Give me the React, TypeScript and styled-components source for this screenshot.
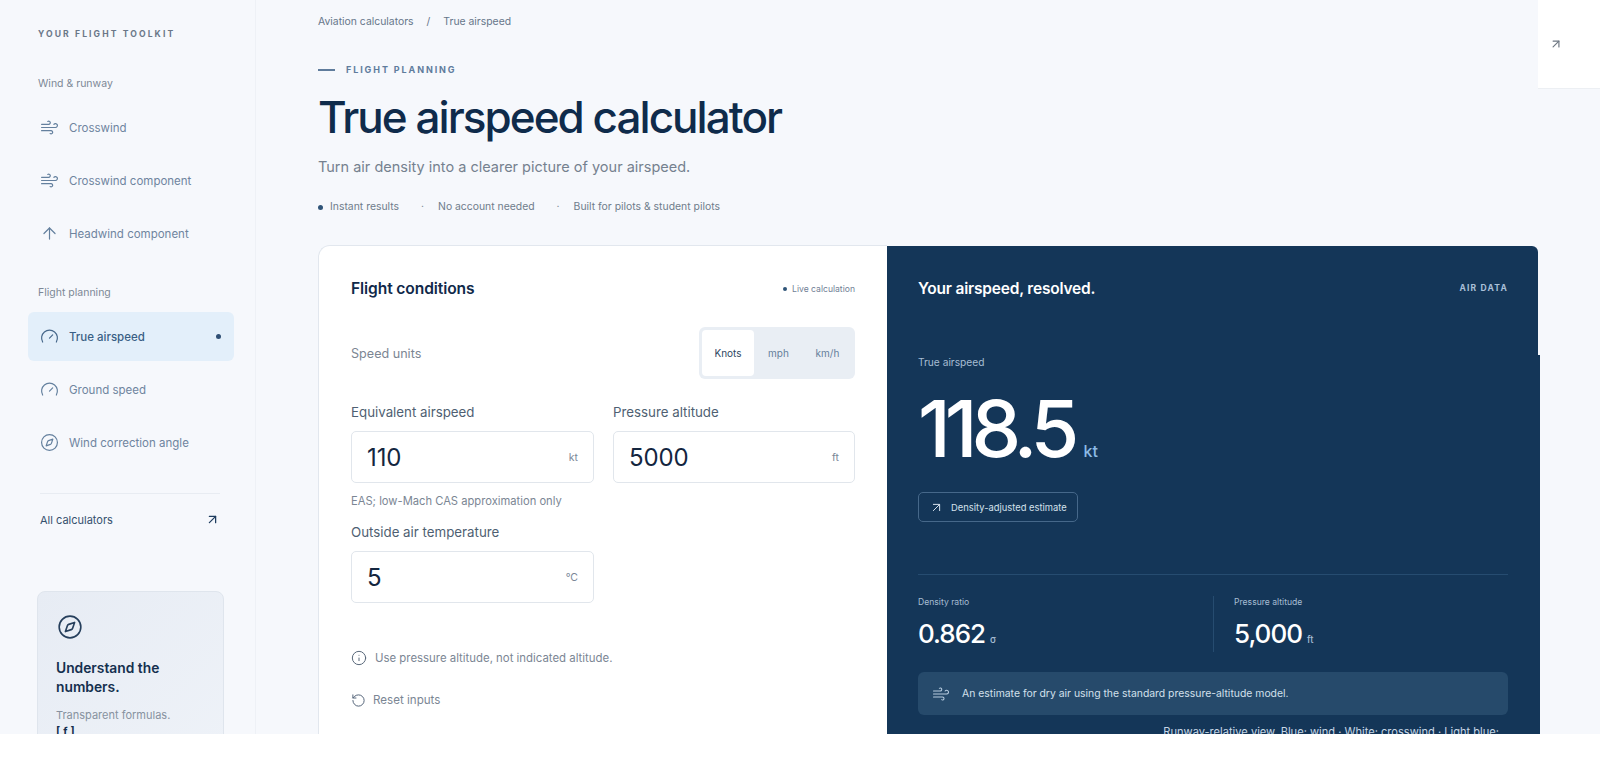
import React from 'react';
import styled, { createGlobalStyle } from 'styled-components';
import { Wind, ArrowUp, Gauge, Compass, ArrowUpRight, Info, RotateCcw } from 'lucide-react';

const Global = createGlobalStyle`
  html, body { margin: 0; padding: 0; background: #ffffff; }
  * { box-sizing: border-box; }
  body { font-family: Inter, "Noto Sans", sans-serif; }
`;

const Page = styled.div`
  display: flex;
  width: 1600px;
  height: 734px;
  overflow: hidden;
  background: #f6f8fc;
`;

const Sidebar = styled.aside`
  flex: 0 0 256px;
  padding: 28px 21px 0 28px;
  border-right: 1px solid #eef1f6;
`;

const Brand = styled.div`
  font-size: 8.6px;
  line-height: 12px;
  font-weight: 700;
  letter-spacing: 2.1px;
  color: #6a7788;
  padding-left: 10px;
  margin-bottom: 37px;
`;

const GroupLabel = styled.div`
  font-size: 10.5px;
  line-height: 14px;
  color: #7d8896;
  padding-left: 10px;
  margin-bottom: 12px;
`;

const NavList = styled.nav`
  display: flex;
  flex-direction: column;
  gap: 4px;
  margin-bottom: 28px;
`;

const NavRow = styled.a<{ $active?: boolean }>`
  display: flex;
  align-items: center;
  gap: 10px;
  height: 49px;
  padding: 0 13px 0 12px;
  border-radius: 6px;
  font-size: 11.5px;
  font-weight: ${p => (p.$active ? 500 : 400)};
  color: ${p => (p.$active ? '#3a5f85' : '#6f859f')};
  background: ${p => (p.$active ? '#e3effa' : 'transparent')};
  svg { flex: none; color: ${p => (p.$active ? '#46678a' : '#64809e')}; }
`;

const ActiveDot = styled.span`
  margin-left: auto;
  width: 5px;
  height: 5px;
  border-radius: 50%;
  background: #2f4f74;
`;

const AllLink = styled.a`
  display: flex;
  align-items: center;
  justify-content: space-between;
  margin: -2px 14px 0 12px;
  height: 52px;
  border-top: 1px solid #e8ecf2;
  font-size: 11px;
  color: #35506e;
  svg { color: #1f3d5f; }
`;

const HelpCard = styled.div`
  width: 187px;
  height: 170px;
  margin: 46px 0 0 9px;
  padding: 22px 18px;
  border: 1px solid #dfe5ed;
  border-radius: 8px;
  background: linear-gradient(135deg, #e7ecf4, #eef2f8);
  svg { display: block; margin-left: 1px; color: #263f5c; }
`;

const HelpTitle = styled.div`
  margin-top: 19px;
  font-size: 13.8px;
  line-height: 19px;
  font-weight: 600;
  color: #15304f;
`;

const HelpText = styled.div`
  margin-top: 10px;
  font-size: 11px;
  line-height: 16px;
  color: #87929f;
`;

const HelpFormula = styled.div`
  font-size: 11px;
  line-height: 16px;
  font-weight: 700;
  color: #15304f;
`;

const Main = styled.main`
  flex: 1;
  min-width: 0;
  padding: 15px 0 0 62px;
`;

const Crumbs = styled.div`
  display: flex;
  gap: 13px;
  font-size: 10.4px;
  line-height: 14px;
  color: #66768a;
`;

const Eyebrow = styled.div`
  display: flex;
  align-items: center;
  gap: 11px;
  margin-top: 34px;
  font-size: 9px;
  line-height: 14px;
  font-weight: 700;
  letter-spacing: 1.9px;
  color: #5f7c9c;
  &::before { content: ''; width: 17px; height: 2px; background: #5f7c9c; }
`;

const Title = styled.h1`
  margin: 12px 0 0;
  font-size: 44px;
  line-height: 56px;
  font-weight: 500;
  letter-spacing: -1.95px;
  color: #0f2b4b;
`;

const Subtitle = styled.p`
  margin: 11px 0 0;
  font-size: 14.5px;
  line-height: 22px;
  color: #75818f;
`;

const Meta = styled.div`
  display: flex;
  align-items: center;
  margin-top: 22px;
  font-size: 10.4px;
  line-height: 14px;
  color: #6f7c8b;
`;

const MetaDot = styled.span`
  width: 5px;
  height: 5px;
  margin-right: 7px;
  border-radius: 50%;
  background: #2f5478;
`;

const MetaSep = styled.span`
  margin: 0 14px 0 22px;
`;

const Shell = styled.section`
  display: flex;
  align-items: flex-start;
  margin: 31px -2px 0 0;
`;

const InputPanel = styled.div`
  flex: 0 0 567px;
  height: 520px;
  padding: 32px 32px 0;
  background: #ffffff;
  border: 1px solid #e2e7ee;
  border-right: 0;
  border-radius: 12px 0 0 12px;
`;

const PanelHead = styled.div`
  display: flex;
  align-items: center;
  justify-content: space-between;
`;

const PanelTitle = styled.h2`
  margin: 0;
  font-size: 15.6px;
  line-height: 22px;
  font-weight: 600;
  letter-spacing: -0.1px;
  color: #10294a;
`;

const LiveBadge = styled.span`
  display: flex;
  align-items: center;
  gap: 5px;
  font-size: 8.6px;
  color: #708095;
  &::before { content: ''; width: 4px; height: 4px; border-radius: 50%; background: #2f5478; }
`;

const UnitsRow = styled.div`
  display: flex;
  align-items: center;
  justify-content: space-between;
  margin-top: 27px;
  font-size: 12.6px;
  color: #7c8693;
`;

const Segments = styled.div`
  display: flex;
  width: 156px;
  height: 52px;
  padding: 3px;
  border-radius: 6px;
  background: #e9eef4;
`;

const Segment = styled.button<{ $on?: boolean }>`
  flex: ${p => (p.$on ? '0 0 52px' : '1')};
  padding: 0;
  border: 0;
  border-radius: 4px;
  font: inherit;
  font-size: 10px;
  color: ${p => (p.$on ? '#2f4762' : '#667f9a')};
  background: ${p => (p.$on ? '#ffffff' : 'transparent')};
`;

const Fields = styled.div`
  display: grid;
  grid-template-columns: 243px 242px;
  column-gap: 19px;
  row-gap: 15px;
  margin-top: 24px;
`;

const Label = styled.label`
  display: block;
  font-size: 13.3px;
  line-height: 18px;
  color: #4f5f72;
`;

const InputBox = styled.div`
  display: flex;
  align-items: center;
  height: 52px;
  margin-top: 10px;
  padding: 0 15px;
  background: #fff;
  border: 1px solid #e1e6ec;
  border-radius: 5px;
`;

const NumberInput = styled.input`
  flex: 1;
  min-width: 0;
  padding: 0;
  border: 0;
  outline: 0;
  background: transparent;
  font: inherit;
  font-size: 24px;
  letter-spacing: -0.1px;
  color: #14263f;
`;

const Unit = styled.span`
  font-size: 10.5px;
  color: #7a8797;
`;

const Hint = styled.div`
  margin-top: 11px;
  font-size: 11.2px;
  line-height: 14px;
  color: #7b8694;
`;

const InfoLine = styled.div`
  display: flex;
  align-items: center;
  gap: 8px;
  margin-top: 47px;
  font-size: 11.4px;
  line-height: 16px;
  color: #7b8694;
  svg { color: #59687a; }
`;

const ResetLine = styled.div`
  display: flex;
  align-items: center;
  gap: 7px;
  margin-top: 26px;
  font-size: 11.6px;
  line-height: 16px;
  color: #7b8694;
  svg { color: #55657a; }
`;

const ResultPanel = styled.div`
  flex: 1;
  margin-top: 1px;
  color: #ffffff;
`;

const ResultTop = styled.div`
  display: flex;
  align-items: flex-start;
  justify-content: space-between;
  height: 109px;
  margin-right: 2px;
  padding: 32px 30px 0 31px;
  background: #143658;
  border-radius: 0 6px 0 0;
`;

const ResultTitle = styled.h2`
  margin: 0;
  font-size: 15.5px;
  line-height: 22px;
  font-weight: 600;
  letter-spacing: -0.2px;
`;

const Tag = styled.span`
  font-size: 8.5px;
  line-height: 20px;
  font-weight: 700;
  letter-spacing: 1.2px;
  color: #a9c0d8;
`;

const ResultBody = styled.div`
  height: 380px;
  padding: 0 32px 0 31px;
  background: #143658;
`;

const BigLabel = styled.div`
  font-size: 10.2px;
  line-height: 14px;
  color: #a7bdd3;
`;

const BigValue = styled.div`
  display: flex;
  align-items: baseline;
  gap: 10px;
  height: 80px;
  margin-top: 19px;
  font-size: 79px;
  line-height: 80px;
  font-weight: 500;
  letter-spacing: -6px;
`;

const BigUnit = styled.span`
  font-size: 16px;
  line-height: 1;
  letter-spacing: 0;
  color: #8dbbe6;
`;

const Pill = styled.div`
  display: flex;
  align-items: center;
  gap: 7px;
  width: 160px;
  height: 30px;
  margin-top: 24px;
  padding: 0 10px;
  border: 1px solid #46688a;
  border-radius: 5px;
  font-size: 9.4px;
  color: #d5e1ec;
  svg { flex: none; }
`;

const Stats = styled.div`
  display: grid;
  grid-template-columns: 1fr 1fr;
  margin-top: 52px;
  padding-top: 21px;
  border-top: 1px solid #264c70;
`;

const Stat = styled.div<{ $second?: boolean }>`
  height: 56px;
  padding-left: ${p => (p.$second ? '20px' : '0')};
  border-left: ${p => (p.$second ? '1px solid #264c70' : '0')};
`;

const StatLabel = styled.div`
  font-size: 8.6px;
  line-height: 12px;
  color: #a7bdd3;
`;

const StatValue = styled.div`
  display: flex;
  align-items: baseline;
  gap: 5px;
  height: 32px;
  margin-top: 10px;
  font-size: 26px;
  line-height: 32px;
  font-weight: 500;
  letter-spacing: -1px;
`;

const StatUnit = styled.span`
  font-size: 9.5px;
  line-height: 1;
  letter-spacing: 0;
  color: #a7bdd3;
`;

const Note = styled.div`
  display: flex;
  align-items: center;
  gap: 12px;
  height: 43px;
  margin-top: 20px;
  padding: 0 14px;
  border-radius: 6px;
  background: #264a6b;
  font-size: 10.4px;
  color: #d3e0ec;
  svg { flex: none; color: #b7cce0; }
`;

const Footnote = styled.div`
  margin-top: 9px;
  padding-right: 9px;
  text-align: right;
  font-size: 11.1px;
  line-height: 16px;
  color: #c6d6e6;
`;

const Corner = styled.div`
  flex: 0 0 62px;
  height: 89px;
  display: flex;
  align-items: center;
  padding-left: 11px;
  background: #ffffff;
  border-bottom: 1px solid #eceff3;
  svg { color: #6e7782; }
`;

const navOne = [
  { icon: Wind, text: 'Crosswind' },
  { icon: Wind, text: 'Crosswind component' },
  { icon: ArrowUp, text: 'Headwind component' },
];
const navTwo = [
  { icon: Gauge, text: 'True airspeed', active: true },
  { icon: Gauge, text: 'Ground speed' },
  { icon: Compass, text: 'Wind correction angle' },
];

export default function App() {
  return (
    <>
      <Global />
      <Page>
        <Sidebar>
          <Brand>YOUR FLIGHT TOOLKIT</Brand>
          <GroupLabel>Wind &amp; runway</GroupLabel>
          <NavList>
            {navOne.map(n => (
              <NavRow key={n.text}>
                <n.icon size={19} strokeWidth={1.5} />
                {n.text}
              </NavRow>
            ))}
          </NavList>
          <GroupLabel>Flight planning</GroupLabel>
          <NavList>
            {navTwo.map(n => (
              <NavRow key={n.text} $active={n.active}>
                <n.icon size={19} strokeWidth={1.5} />
                {n.text}
                {n.active && <ActiveDot />}
              </NavRow>
            ))}
          </NavList>
          <AllLink>
            All calculators
            <ArrowUpRight size={15} strokeWidth={2} />
          </AllLink>
          <HelpCard>
            <Compass size={26} strokeWidth={1.5} />
            <HelpTitle>Understand the numbers.</HelpTitle>
            <HelpText>Transparent formulas.</HelpText>
            <HelpFormula>[ ƒ ]</HelpFormula>
          </HelpCard>
        </Sidebar>
        <Main>
          <Crumbs>
            <span>Aviation calculators</span>
            <span>/</span>
            <span>True airspeed</span>
          </Crumbs>
          <Eyebrow>FLIGHT PLANNING</Eyebrow>
          <Title>True airspeed calculator</Title>
          <Subtitle>Turn air density into a clearer picture of your airspeed.</Subtitle>
          <Meta>
            <MetaDot />
            Instant results
            <MetaSep>·</MetaSep>
            No account needed
            <MetaSep>·</MetaSep>
            Built for pilots &amp; student pilots
          </Meta>
          <Shell>
            <InputPanel>
              <PanelHead>
                <PanelTitle>Flight conditions</PanelTitle>
                <LiveBadge>Live calculation</LiveBadge>
              </PanelHead>
              <UnitsRow>
                Speed units
                <Segments>
                  <Segment $on>Knots</Segment>
                  <Segment>mph</Segment>
                  <Segment>km/h</Segment>
                </Segments>
              </UnitsRow>
              <Fields>
                <div>
                  <Label>Equivalent airspeed</Label>
                  <InputBox>
                    <NumberInput defaultValue="110" />
                    <Unit>kt</Unit>
                  </InputBox>
                  <Hint>EAS; low-Mach CAS approximation only</Hint>
                </div>
                <div>
                  <Label>Pressure altitude</Label>
                  <InputBox>
                    <NumberInput defaultValue="5000" />
                    <Unit>ft</Unit>
                  </InputBox>
                </div>
                <div>
                  <Label>Outside air temperature</Label>
                  <InputBox>
                    <NumberInput defaultValue="5" />
                    <Unit>°C</Unit>
                  </InputBox>
                </div>
              </Fields>
              <InfoLine>
                <Info size={16} strokeWidth={1.5} />
                Use pressure altitude, not indicated altitude.
              </InfoLine>
              <ResetLine>
                <RotateCcw size={15} strokeWidth={1.6} />
                Reset inputs
              </ResetLine>
            </InputPanel>
            <ResultPanel>
              <ResultTop>
                <ResultTitle>Your airspeed, resolved.</ResultTitle>
                <Tag>AIR DATA</Tag>
              </ResultTop>
              <ResultBody>
                <BigLabel>True airspeed</BigLabel>
                <BigValue>
                  118.5
                  <BigUnit>kt</BigUnit>
                </BigValue>
                <Pill>
                  <ArrowUpRight size={15} strokeWidth={1.6} />
                  Density-adjusted estimate
                </Pill>
                <Stats>
                  <Stat>
                    <StatLabel>Density ratio</StatLabel>
                    <StatValue>
                      0.862<StatUnit>σ</StatUnit>
                    </StatValue>
                  </Stat>
                  <Stat $second>
                    <StatLabel>Pressure altitude</StatLabel>
                    <StatValue>
                      5,000<StatUnit>ft</StatUnit>
                    </StatValue>
                  </Stat>
                </Stats>
                <Note>
                  <Wind size={18} strokeWidth={1.4} />
                  An estimate for dry air using the standard pressure-altitude model.
                </Note>
                <Footnote>Runway-relative view. Blue: wind · White: crosswind · Light blue:</Footnote>
              </ResultBody>
            </ResultPanel>
          </Shell>
        </Main>
        <Corner>
          <ArrowUpRight size={14} strokeWidth={2} />
        </Corner>
      </Page>
    </>
  );
}
